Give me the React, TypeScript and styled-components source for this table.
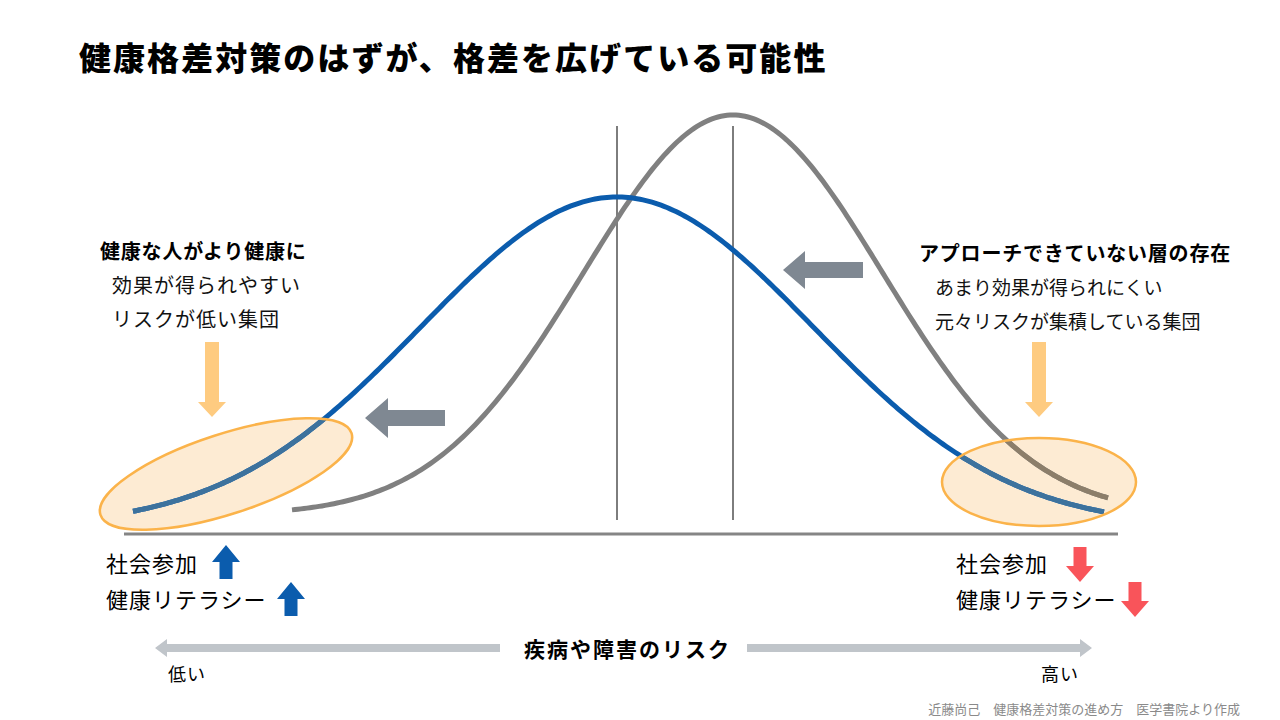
import React from "react";
import styled, { createGlobalStyle } from "styled-components";

const GlobalStyle = createGlobalStyle`
  html, body {
    margin: 0;
    padding: 0;
    background: #ffffff;
  }
  body {
    font-family: "Noto Sans CJK JP", "Noto Sans", sans-serif;
    color: #111;
  }
`;

const Slide = styled.div`
  width: 1280px;
  height: 720px;
  display: flex;
  flex-direction: column;
  overflow: hidden;
  background: #ffffff;
`;

const Title = styled.h1`
  margin: 36px 0 0 79px;
  font-size: 32px;
  font-weight: 900;
  line-height: 40px;
  letter-spacing: 2.05px;
  color: #000;
  white-space: nowrap;
`;

const Figure = styled.div`
  position: relative;
  height: 440px;
  margin-top: 24px;
`;

const ChartSvg = styled.svg`
  display: block;
`;

const Note = styled.div<{ $left: number; $top: number }>`
  position: absolute;
  left: ${(p) => p.$left}px;
  top: ${(p) => p.$top}px;
  display: flex;
  flex-direction: column;
  white-space: nowrap;
`;

const NoteHead = styled.div`
  font-size: 20px;
  font-weight: 700;
  line-height: 34px;
  letter-spacing: 0.8px;
  color: #000;
`;

const NoteLine = styled.div<{ $indent: number; $size: number; $spacing: number }>`
  padding-left: ${(p) => p.$indent}px;
  font-size: ${(p) => p.$size}px;
  letter-spacing: ${(p) => p.$spacing}px;
  line-height: 34px;
  color: #111;
`;

const Indicators = styled.div`
  display: grid;
  grid-template-columns: 850px auto;
  padding: 4px 0 0 106px;
`;

const IndicatorList = styled.div`
  display: flex;
  flex-direction: column;
`;

const IndicatorRow = styled.div<{ $gap: number; $shift?: number }>`
  display: flex;
  align-items: center;
  height: 36px;
  gap: ${(p) => p.$gap}px;
  svg {
    margin-top: ${(p) => p.$shift ?? 0}px;
  }
`;

const IndicatorText = styled.span`
  font-size: 22px;
  letter-spacing: 1px;
  line-height: 36px;
  color: #000;
  white-space: nowrap;
`;

const RiskRow = styled.div`
  display: flex;
  align-items: center;
  height: 24px;
  margin-top: 20px;
  padding-left: 155px;
`;

const RiskLabel = styled.span`
  margin: 0 16px 0 24px;
  font-size: 21px;
  font-weight: 700;
  letter-spacing: 2px;
  line-height: 24px;
  color: #000;
  white-space: nowrap;
`;

const ScaleLabels = styled.div`
  display: grid;
  grid-template-columns: 873px auto;
  padding-left: 168px;
  margin-top: 2px;
  font-size: 18px;
  letter-spacing: 1px;
  line-height: 22px;
  color: #000;
`;

const Footer = styled.div`
  margin-top: 17px;
  padding-right: 40px;
  text-align: right;
  font-size: 13px;
  line-height: 16px;
  color: #8a8a8a;
  white-space: pre;
`;

const BLUE = "#0b5cad";
const RED = "#f9545a";
const GRAY = "#808080";
const ORANGE_ARROW = "#fecb80";
const SLATE = "#7f8892";
const RISK_GRAY = "#c0c5ca";

function curvePath(
  from: number,
  to: number,
  base: number,
  amp: number,
  mu: number,
  k: number
): string {
  const pts: string[] = [];
  for (let x = from; x <= to; x += 3) {
    const y = base - amp * Math.exp(-k * (x - mu) * (x - mu));
    pts.push(`${x.toFixed(1)},${y.toFixed(2)}`);
  }
  const yEnd = base - amp * Math.exp(-k * (to - mu) * (to - mu));
  pts.push(`${to},${yEnd.toFixed(2)}`);
  return "M" + pts.join(" L");
}

const grayPath = curvePath(292, 1108, 515, 400, 733, 2.24e-5);
const bluePath = curvePath(133, 1104, 527, 330, 617, 1.3e-5);

const UpArrow = ({ color }: { color: string }) => (
  <svg width="28" height="34" viewBox="0 0 28 34">
    <polygon
      points="14,0 28,17 20.5,17 20.5,34 7.5,34 7.5,17 0,17"
      fill={color}
    />
  </svg>
);

const DownArrow = ({ color }: { color: string }) => (
  <svg width="28" height="35" viewBox="0 0 28 35">
    <polygon
      points="7.5,0 20.5,0 20.5,19 28,19 14,35 0,19 7.5,19"
      fill={color}
    />
  </svg>
);

const AxisArrow = ({ dir }: { dir: "left" | "right" }) => (
  <svg width="345" height="18" viewBox="0 0 345 18">
    {dir === "left" ? (
      <polygon points="0,9 12,0 12,5 345,5 345,13 12,13 12,18" fill={RISK_GRAY} />
    ) : (
      <polygon points="345,9 333,0 333,5 0,5 0,13 333,13 333,18" fill={RISK_GRAY} />
    )}
  </svg>
);

const Chart = () => (
  <ChartSvg width="1280" height="440" viewBox="0 100 1280 440">
    <defs>
      <clipPath id="groups">
        <ellipse cx="226" cy="474" rx="132" ry="40" transform="rotate(-18 226 474)" />
        <ellipse cx="1039" cy="482" rx="97" ry="44" />
      </clipPath>
    </defs>

    <ellipse
      cx="226"
      cy="474"
      rx="132"
      ry="40"
      transform="rotate(-18 226 474)"
      fill="#fdebd3"
    />
    <ellipse cx="1039" cy="482" rx="97" ry="44" fill="#fdebd3" />

    <line x1="124" y1="534" x2="1118" y2="534" stroke="#858585" strokeWidth="3" />
    <line x1="617" y1="126" x2="617" y2="520" stroke="#7d7d7d" strokeWidth="2" />
    <line x1="733" y1="126" x2="733" y2="520" stroke="#7d7d7d" strokeWidth="2" />

    <path d={grayPath} fill="none" stroke={GRAY} strokeWidth="5" />
    <path d={bluePath} fill="none" stroke={BLUE} strokeWidth="5" />

    <g clipPath="url(#groups)">
      <path d={grayPath} fill="none" stroke="#8c7e6a" strokeWidth="5" />
      <path d={bluePath} fill="none" stroke="#3d729d" strokeWidth="5" />
    </g>

    <ellipse
      cx="226"
      cy="474"
      rx="132"
      ry="40"
      transform="rotate(-18 226 474)"
      fill="none"
      stroke="#fbb34a"
      strokeWidth="2.5"
    />
    <ellipse
      cx="1039"
      cy="482"
      rx="97"
      ry="44"
      fill="none"
      stroke="#fbb34a"
      strokeWidth="2.5"
    />

    <polygon
      points="205,342 219,342 219,402 226,402 212,417 198,402 205,402"
      fill={ORANGE_ARROW}
    />
    <polygon
      points="1032,342 1046,342 1046,402 1053,402 1039,417 1025,402 1032,402"
      fill={ORANGE_ARROW}
    />

    <polygon
      points="365,418 388,398 388,410 445,410 445,426 388,426 388,438"
      fill={SLATE}
    />
    <polygon
      points="783,270 805,251 805,262 863,262 863,278 805,278 805,289"
      fill={SLATE}
    />
  </ChartSvg>
);

export default function App() {
  return (
    <>
      <GlobalStyle />
      <Slide>
        <Title>健康格差対策のはずが、格差を広げている可能性</Title>

        <Figure>
          <Chart />
          <Note $left={100} $top={134}>
            <NoteHead>健康な人がより健康に</NoteHead>
            <NoteLine $indent={12} $size={20} $spacing={1}>
              効果が得られやすい
            </NoteLine>
            <NoteLine $indent={12} $size={20} $spacing={1}>
              リスクが低い集団
            </NoteLine>
          </Note>
          <Note $left={919} $top={136}>
            <NoteHead>アプローチできていない層の存在</NoteHead>
            <NoteLine $indent={16} $size={19} $spacing={0}>
              あまり効果が得られにくい
            </NoteLine>
            <NoteLine $indent={16} $size={19} $spacing={0}>
              元々リスクが集積している集団
            </NoteLine>
          </Note>
        </Figure>

        <Indicators>
          <IndicatorList>
            <IndicatorRow $gap={14}>
              <IndicatorText>社会参加</IndicatorText>
              <UpArrow color={BLUE} />
            </IndicatorRow>
            <IndicatorRow $gap={10} $shift={2}>
              <IndicatorText>健康リテラシー</IndicatorText>
              <UpArrow color={BLUE} />
            </IndicatorRow>
          </IndicatorList>
          <IndicatorList>
            <IndicatorRow $gap={18} $shift={4}>
              <IndicatorText>社会参加</IndicatorText>
              <DownArrow color={RED} />
            </IndicatorRow>
            <IndicatorRow $gap={4} $shift={2}>
              <IndicatorText>健康リテラシー</IndicatorText>
              <DownArrow color={RED} />
            </IndicatorRow>
          </IndicatorList>
        </Indicators>

        <RiskRow>
          <AxisArrow dir="left" />
          <RiskLabel>疾病や障害のリスク</RiskLabel>
          <AxisArrow dir="right" />
        </RiskRow>

        <ScaleLabels>
          <span>低い</span>
          <span>高い</span>
        </ScaleLabels>

        <Footer>近藤尚己　健康格差対策の進め方　医学書院より作成</Footer>
      </Slide>
    </>
  );
}
